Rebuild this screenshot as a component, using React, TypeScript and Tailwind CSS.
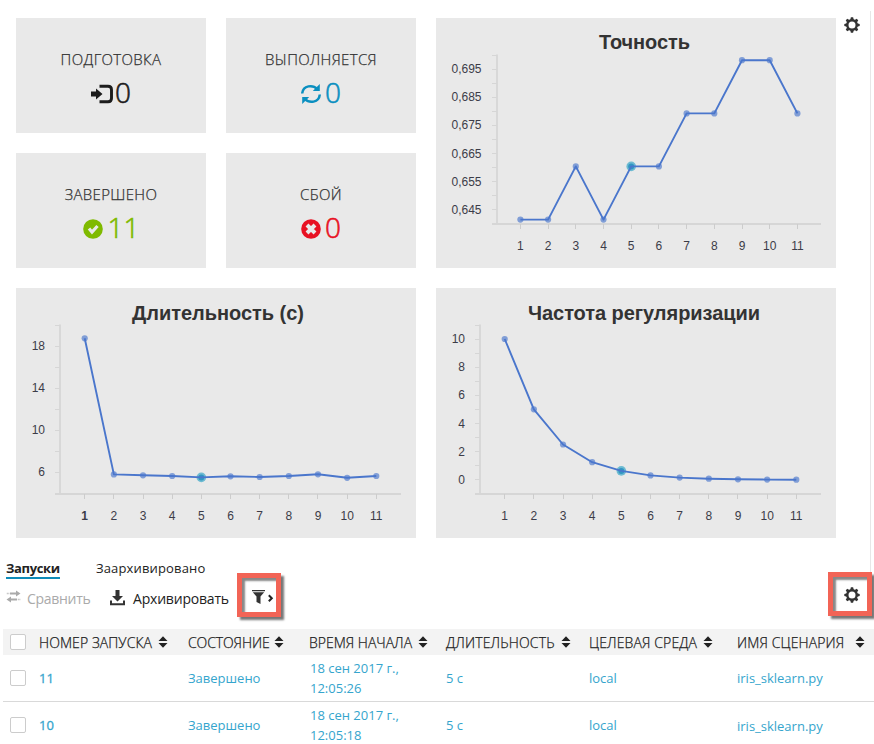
import React from "react";

const ui = "font-['Open_Sans','Noto_Sans',sans-serif]";

type ChartProps = {
  title: string;
  titleX: number;
  titleY: number;
  titleWidth: number;
  axisX: number;
  labelX: number;
  yLabels: { text: string; y: number }[];
  ticks: number;
  firstX: number;
  step: number;
  values: number[];
  boldFirst?: boolean;
};

function Chart(p: ChartProps) {
  const tickGap = 169 / (p.ticks - 1);
  const xs = p.values.map((_, i) => p.firstX + i * p.step);
  return (
    <svg width="400" height="250" viewBox="0 0 400 250" className="block bg-[#e9e9e9] font-['Liberation_Sans',Arial,sans-serif]">
      <text x={p.titleX} y={p.titleY} textLength={p.titleWidth} fontSize="20" fontWeight="700" fill="#333">{p.title}</text>
      <g stroke="#d6d6d6" fill="none">
        <path d={`M${p.axisX} 36.5V206`} strokeWidth="1.8" />
        <path d={`M${p.axisX - 5} 206H385`} strokeWidth="1.8" />
        {Array.from({ length: p.ticks }, (_, i) => (
          <path key={i} d={`M${p.axisX - 5} ${Math.floor(37 + i * tickGap) + 0.5}h5`} strokeWidth="1" />
        ))}
        {xs.map((x) => (
          <path key={x} d={`M${Math.floor(x) + 0.5} 206v5`} strokeWidth="1" stroke="#ccc" />
        ))}
      </g>
      <g fontSize="12" fill="#3c3c48">
        {p.yLabels.map((l) => (
          <text key={l.text} x={p.labelX} y={l.y + 4} textAnchor="end">{l.text}</text>
        ))}
        {xs.map((x, i) => (
          <text key={x} x={x} y="232" textAnchor="middle" fontWeight={p.boldFirst && i === 0 ? 700 : 400}>{i + 1}</text>
        ))}
      </g>
      {xs.map((x, i) =>
        i === 4 ? (
          <g key={x}>
            <circle cx={x} cy={p.values[i]} r="4.8" fill="#2ba3c4" fillOpacity=".65" />
            <circle cx={x} cy={p.values[i]} r="3" fill="#1a86bd" fillOpacity=".7" />
          </g>
        ) : (
          <circle key={x} cx={x} cy={p.values[i]} r="3.1" fill="#4a76cc" fillOpacity=".65" />
        )
      )}
      <polyline points={xs.map((x, i) => `${x},${p.values[i]}`).join(" ")} fill="none" stroke="#4a76cc" strokeWidth="1.9" strokeLinejoin="round" />
    </svg>
  );
}

function Tile({ label, value, tone, children }: { label: string; value: string; tone: string; children: React.ReactNode }) {
  return (
    <div className="flex flex-col items-center bg-[#e9e9e9] pt-[31px]">
      <div className="text-[15px] leading-[21px] font-light tracking-[0.35px] text-[#333] whitespace-nowrap [-webkit-text-stroke:0.25px_currentColor]">{label}</div>
      <div className={`mt-1 flex h-9 items-center ${tone}`}>
        {children}
        <span className="text-[28px] leading-9 font-light [-webkit-text-stroke:0.6px_currentColor]">{value}</span>
      </div>
    </div>
  );
}

function Gear() {
  return (
    <svg width="16" height="16" viewBox="0 0 16 16" className="block">
      <circle cx="8" cy="8" r="4.7" fill="none" stroke="#333" strokeWidth="2.4" />
      {[0, 45, 90, 135, 180, 225, 270, 315].map((a) => (
        <path key={a} d="M6.2 3 6.900 .3h2.200L9.800 3z" fill="#333" transform={`rotate(${a} 8 8)`} />
      ))}
    </svg>
  );
}

function Sort() {
  return (
    <svg width="10" height="12" viewBox="0 0 10 12" className="block shrink-0">
      <path d="M5 .3 9.5 5H.5zM5 11.7 9.5 7H.5z" fill="#222" />
    </svg>
  );
}

function Box() {
  return <span className="block h-4 w-4 rounded-[2px] border border-[#ccc] bg-white" />;
}

const cols = "grid grid-cols-[36px_149px_121px_137px_143px_148px_137px]";

const headers = [
  { text: "НОМЕР ЗАПУСКА", width: "w-[119px]", tracking: "tracking-[0.08px]" },
  { text: "СОСТОЯНИЕ", width: "w-[86px]", tracking: "tracking-[-0.1px]" },
  { text: "ВРЕМЯ НАЧАЛА", width: "w-[109px]", tracking: "tracking-[0px]" },
  { text: "ДЛИТЕЛЬНОСТЬ", width: "w-[115px]", tracking: "tracking-[0.15px]" },
  { text: "ЦЕЛЕВАЯ СРЕДА", width: "w-[114px]", tracking: "tracking-[0.12px]" },
  { text: "ИМЯ СЦЕНАРИЯ", width: "w-[118px]", tracking: "tracking-[0.12px]" },
];

function Row({ id, time, drop }: { id: string; time: string; drop: string }) {
  return (
    <div className={`${cols} h-[47px] items-center border-b border-[#d9d9d9] text-[13px] leading-5 text-[#35a5cd] whitespace-nowrap`}>
      <span className="pl-[7px]"><Box /></span>
      <span className="[-webkit-text-stroke:0.3px_currentColor]">{id}</span>
      <span>Завершено</span>
      <span className="pl-px">18 сен 2017 г.,<br />{time}</span>
      <span>5 с</span>
      <span>local</span>
      <span className={drop}>iris_sklearn.py</span>
    </div>
  );
}

const frame = "absolute h-11 w-11 border-[5px] border-[#f26456] shadow-[3px_3px_2px_#777,inset_3px_3px_2px_#888]";

export default function App() {
  return (
    <div className={`relative h-[744px] w-[874px] overflow-hidden bg-white ${ui}`}>
      <div className="absolute top-[11px] left-[870px] h-[561px] w-px bg-[#e7e7e7]" />
      <div className="flex h-[538px] gap-2 pt-[18px] pl-4">
        <div className="grid grid-cols-[190px_190px_400px] grid-rows-[115px_115px_250px] gap-5">
          <Tile label="ПОДГОТОВКА" value="0" tone="text-[#1c1c1c]">
            <svg width="22" height="20" viewBox="0 0 22 20" className="mt-[3px] mr-[2px]">
              <path d="M8.500 2.200h8.500q3.500 0 3.500 3.500v8.600q0 3.500-3.500 3.500H8.500" fill="none" stroke="currentColor" strokeWidth="2.900" />
              <path d="M0 7.600h5V4.600l6.500 5.400-6.500 5.400v-3H0z" fill="currentColor" />
            </svg>
          </Tile>
          <Tile label="ВЫПОЛНЯЕТСЯ" value="0" tone="text-[#0a8fc0]">
            <svg width="22" height="20" viewBox="0 0 22 20" className="mt-[3px] mr-[2px]">
              <path d="M1.2 9.5C2 1 12 .5 16 5M18.8 10.5C18 19 8 19.5 4 15" fill="none" stroke="currentColor" strokeWidth="2.5" />
              <path d="M18.8 0v7h-7zM1.2 20v-7h7z" fill="currentColor" />
            </svg>
          </Tile>
          <div className="row-span-2">
            <Chart
              title="Точность" titleX={163} titleY={31} titleWidth={91} axisX={61} labelX={45.5} ticks={13}
              yLabels={["0,695", "0,685", "0,675", "0,665", "0,655", "0,645"].map((text, i) => ({ text, y: 51.2 + i * 28.1 }))}
              firstX={84.4} step={27.7}
              values={[201.6, 201.6, 148.4, 201.6, 148.4, 148.4, 95.4, 95.4, 42.2, 42.2, 95.4]}
            />
          </div>
          <Tile label="ЗАВЕРШЕНО" value="11" tone="text-[#7fba00]">
            <svg width="20" height="20" viewBox="0 0 20 20" className="mt-[3px] mr-[5px]">
              <circle cx="10" cy="10" r="9.8" fill="currentColor" />
              <path d="m6 9.5 3 3.5 5.5-6" fill="none" stroke="#e9e9e9" strokeWidth="3.2" />
            </svg>
          </Tile>
          <Tile label="СБОЙ" value="0" tone="text-[#e81123]">
            <svg width="20" height="20" viewBox="0 0 20 20" className="mt-[3px] mr-[4px]">
              <circle cx="10" cy="10" r="9.8" fill="currentColor" />
              <path d="m6 6 8 8m0-8-8 8" stroke="#e9e9e9" strokeWidth="4" />
            </svg>
          </Tile>
          <div className="col-span-2">
            <Chart
              title="Длительность (с)" titleX={116} titleY={32} titleWidth={172} axisX={44} labelX={29} ticks={9}
              yLabels={["18", "14", "10", "6"].map((text, i) => ({ text, y: 57.9 + i * 42.1 }))}
              firstX={68.7} step={29.16}
              values={[50.3, 186.4, 187.3, 188, 189.4, 188.3, 189, 188, 186.3, 189.8, 188]}
              boldFirst
            />
          </div>
          <Chart
            title="Частота регуляризации" titleX={92} titleY={32} titleWidth={232} axisX={44} labelX={29} ticks={13}
            yLabels={["10", "8", "6", "4", "2", "0"].map((text, i) => ({ text, y: 51.2 + i * 28.1 }))}
            firstX={68.7} step={29.16}
            values={[51, 121.3, 156.5, 174.2, 182.9, 187.4, 189.6, 190.7, 191.3, 191.6, 191.7]}
          />
        </div>
        <div className="-mt-px h-4"><Gear /></div>
      </div>

      <div className="mt-[20px] flex h-[21px] pl-1.5 text-[13px] leading-5 text-[#222] whitespace-nowrap">
        <div className="h-[21px] w-[54px] border-b-2 border-[#0e8bb8] font-bold tracking-[-0.35px]">Запуски</div>
        <div className="ml-9 tracking-[0.15px]">Заархивировано</div>
      </div>

      <div className="flex h-[50px] items-start pt-[9px] pl-1.5 text-[14px] leading-[21px] whitespace-nowrap">
        <svg width="15" height="14" viewBox="0 0 15 14" className="mt-[2px]">
          <path d="M4 3.5h7M4 9.5h7" stroke="#aaa" strokeWidth="1.8" />
          <path d="M10 .5 14.5 3.5 10 6.5zM5 6.5.5 9.5 5 12.5z" fill="#aaa" />
          <path d="M.8 3.5h2.5M11.8 9.5h2.5" stroke="#bbb" strokeWidth="1.5" strokeDasharray="1 .6" />
        </svg>
        <div className="ml-[6px] w-[63px] tracking-[-0.3px] text-[#aaa]">Сравнить</div>
        <svg width="15" height="16" viewBox="0 0 15 16" className="mt-[2px] ml-5">
          <path d="M5.5 0h4v6H13l-5.5 5.6L2 6h3.500z" fill="#333" />
          <path d="M1 10.500V14.300H14V10.500" fill="none" stroke="#333" strokeWidth="2" />
        </svg>
        <div className="ml-2 w-24 tracking-[-0.2px] text-[#222]">Архивировать</div>
        <svg width="24" height="16" viewBox="0 0 24 16" className="mt-px ml-[23px]">
          <path d="M0 1h13v1.300H0zM.8 3.300h11.400L8.500 7.600V15l-4-2V7.600z" fill="#333" />
          <path d="m16.800 6.200 3 3-3 3" fill="none" stroke="#222" strokeWidth="2" />
        </svg>
        <div className="ml-[568px] -mt-px"><Gear /></div>
      </div>

      <div className="ml-[3px]">
        <div className={`${cols} h-[26px] items-center bg-[#f3f3f3] text-[14px] font-light text-[#222] whitespace-nowrap [-webkit-text-stroke:0.25px_currentColor]`}>
          <span className="pl-[7px]"><Box /></span>
          {headers.map((h) => (
            <div key={h.text} className="flex items-center">
              <span className={`${h.width} ${h.tracking}`}>{h.text}</span>
              <Sort />
            </div>
          ))}
        </div>
        <Row id="11" time="12:05:26" drop="" />
        <Row id="10" time="12:05:18" drop="pt-px" />
      </div>

      <div className={`${frame} top-[573px] left-[237px]`} />
      <div className={`${frame} top-[572px] left-[828px]`} />
    </div>
  );
}
